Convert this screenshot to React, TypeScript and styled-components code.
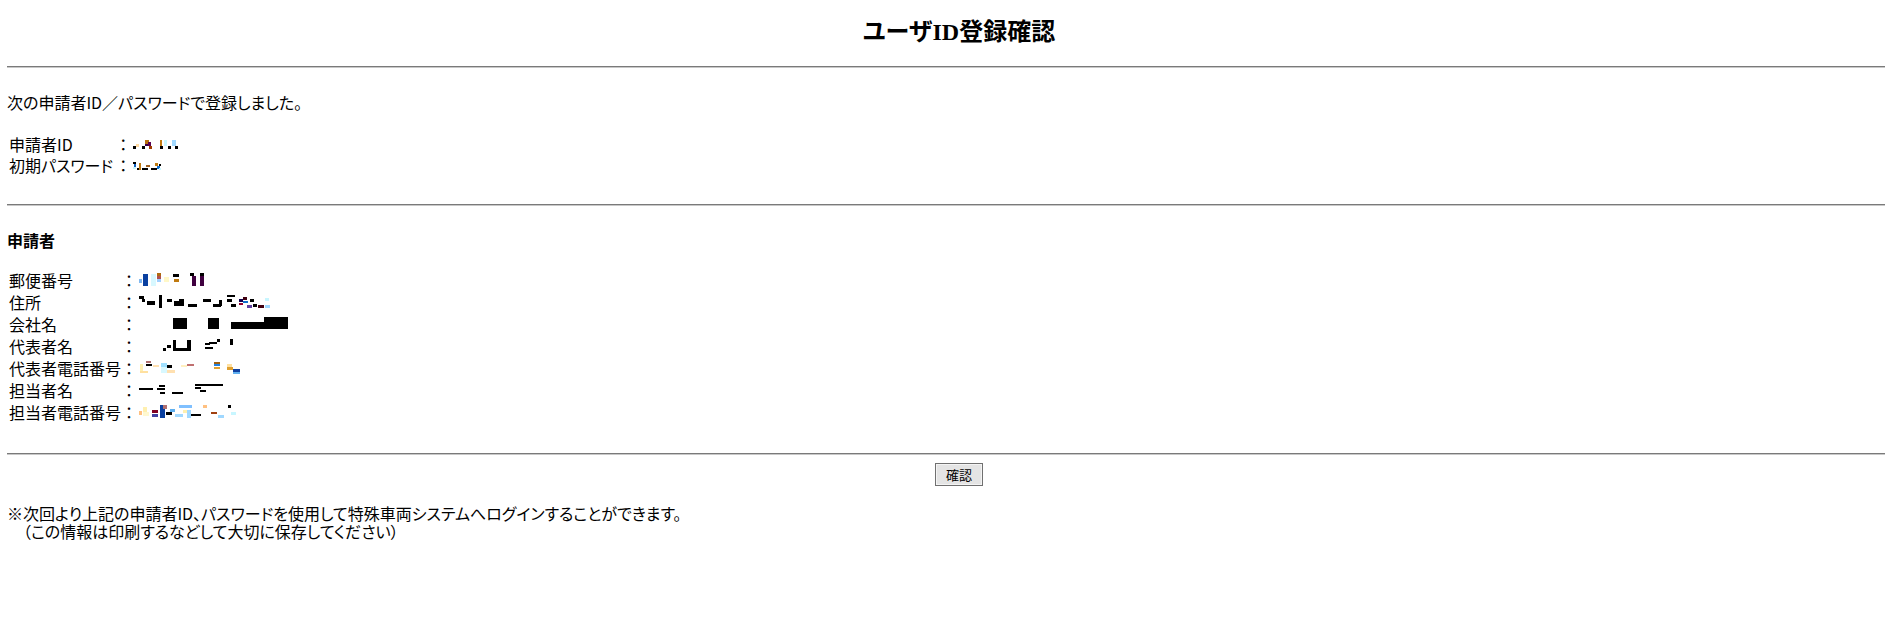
import React from 'react';
import styled, { createGlobalStyle } from 'styled-components';

type Block = [number, number, number, number, string];

const GlobalStyle = createGlobalStyle`
  html, body {
    margin: 0;
    padding: 0;
    background: #ffffff;
    overflow-x: hidden;
  }
  body {
    font-family: "Noto Sans CJK JP", "Liberation Sans", sans-serif;
    font-size: 16px;
    color: #000;
  }
`;

const Page = styled.div`
  width: 1904px;
  margin-left: 7px;
  font-feature-settings: "palt";
`;

const Title = styled.h2`
  margin: 17px 0 19px 0;
  font-family: "Liberation Serif", "Noto Sans CJK JP", serif;
  font-size: 24px;
  line-height: 30px;
  font-weight: bold;
  text-align: center;
`;

const Rule = styled.hr<{ $after: number }>`
  margin: 0 0 ${p => p.$after}px 0;
  height: 0;
  border: none;
  border-top: 1px solid #7a7a7a;
  border-bottom: 1px solid #c8c8c8;
`;

const Message = styled.p<{ $after: number }>`
  margin: 0 0 ${p => p.$after}px 0;
  line-height: 20px;
`;

const SectionTitle = styled.h4`
  margin: 0 0 19px 0;
  font-size: 16px;
  line-height: 20px;
  font-weight: bold;
`;

const InfoTable = styled.div<{ $row: number; $after: number }>`
  display: grid;
  grid-template-columns: max-content 16px 1fr;
  grid-auto-rows: ${p => p.$row}px;
  align-items: center;
  line-height: 18px;
  margin-bottom: ${p => p.$after}px;
`;

const Label = styled.div<{ $gap: number }>`
  padding-left: 2px;
  padding-right: ${p => p.$gap}px;
  white-space: nowrap;
`;

const Colon = styled.div`
  font-feature-settings: normal;
  text-align: center;
`;

const Value = styled.div`
  display: flex;
  align-items: center;
  padding-left: 2px;
`;

const ButtonRow = styled.div`
  display: flex;
  justify-content: center;
  margin: 8px 0 18px 0;
`;

const ConfirmButton = styled.button`
  width: 48px;
  height: 23px;
  padding: 0;
  font-family: "Noto Sans CJK JP", sans-serif;
  font-size: 13px;
  line-height: 18px;
  color: #000;
  background: #e4e4e4;
  border: 1px solid #707070;
  box-shadow: inset 0 0 0 1px #f4f4f4;
  cursor: pointer;
`;

const Note = styled.div`
  line-height: 18px;
`;

const Mosaic: React.FC<{ blocks: Block[]; width: number }> = ({ blocks, width }) => (
  <svg width={width} height={14} viewBox={`0 0 ${width} 14`} shapeRendering="crispEdges">
    {blocks.map(([x, y, w, h, c], i) => (
      <rect key={i} x={x} y={y} width={w} height={h} fill={c} />
    ))}
  </svg>
);

const idBlocks: Block[] = [
  [0, 9, 3, 3, '#000'], [3, 7, 3, 3, '#ffd9a0'], [9, 9, 3, 3, '#000'],
  [12, 3, 4, 4, '#b8700f'], [12, 7, 4, 2, '#3c0048'], [15, 5, 3, 4, '#5a0050'],
  [16, 9, 3, 3, '#a03c00'], [27, 3, 2, 6, '#c07a10'], [27, 9, 3, 3, '#000'],
  [31, 3, 3, 6, '#c8f6ff'], [35, 9, 3, 3, '#000'], [39, 3, 4, 6, '#a0d8ff'], [42, 9, 3, 3, '#000'],
];

const pwBlocks: Block[] = [
  [0, 4, 3, 2, '#000'], [1, 6, 2, 3, '#1060c0'], [0, 9, 3, 2, '#c8f6ff'], [4, 10, 4, 2, '#000'],
  [6, 5, 2, 7, '#c07a10'], [9, 10, 6, 2, '#000'], [13, 7, 4, 2, '#a06020'], [18, 10, 6, 2, '#000'],
  [22, 5, 3, 3, '#c07a10'], [24, 8, 3, 3, '#1070d0'], [26, 6, 2, 2, '#000'], [26, 10, 2, 2, '#c8f6ff'],
];

const postalBlocks: Block[] = [
  [0, 6, 3, 4, '#80b8f0'], [4, 1, 5, 12, '#0a40a0'], [12, 1, 5, 12, '#d8f8ff'],
  [18, 0, 4, 3, '#b06a10'], [18, 3, 4, 3, '#b05050'], [18, 6, 4, 3, '#a0d0ff'],
  [25, 4, 5, 5, '#fff8c8'], [34, 1, 6, 3, '#000'], [35, 6, 5, 3, '#c07a10'],
  [51, 0, 4, 3, '#000'], [53, 3, 4, 10, '#400040'], [61, 0, 4, 3, '#000'], [61, 3, 4, 10, '#400040'],
];

const addressBlocks: Block[] = [
  [0, 1, 5, 3, '#000'], [3, 4, 3, 3, '#000'], [8, 6, 8, 4, '#000'], [20, 0, 3, 13, '#000'],
  [28, 4, 5, 3, '#000'], [35, 6, 10, 5, '#000'], [40, 4, 5, 3, '#000'], [49, 9, 9, 3, '#000'],
  [64, 4, 8, 3, '#000'], [80, 5, 3, 6, '#000'], [74, 9, 8, 3, '#000'], [88, 0, 8, 2, '#000'],
  [88, 4, 5, 3, '#000'], [92, 9, 5, 3, '#000'], [100, 4, 4, 3, '#100050'], [104, 2, 4, 3, '#400010'],
  [100, 8, 4, 2, '#900030'], [104, 6, 5, 2, '#1070d0'], [108, 10, 5, 3, '#6040a0'],
  [111, 4, 4, 3, '#000'], [114, 9, 4, 3, '#000'], [119, 10, 6, 3, '#400010'], [126, 3, 4, 3, '#c8f6ff'],
  [126, 10, 5, 3, '#a0d8ff'],
];

const companyBlocks: Block[] = [
  [34, 1, 14, 11, '#000'], [69, 1, 11, 11, '#000'], [92, 5, 33, 7, '#000'], [125, 0, 24, 12, '#000'],
];

const repBlocks: Block[] = [
  [24, 9, 3, 3, '#000'], [28, 6, 4, 3, '#000'], [34, 1, 3, 11, '#000'], [34, 9, 18, 3, '#000'],
  [48, 1, 4, 11, '#000'], [66, 4, 5, 2, '#000'], [70, 3, 8, 2, '#000'], [66, 8, 8, 2, '#000'],
  [78, 0, 3, 3, '#000'], [91, 0, 3, 6, '#000'],
];

const repTelBlocks: Block[] = [
  [1, 3, 3, 8, '#fff0b0'], [1, 10, 8, 2, '#ffe0a0'], [7, 0, 5, 2, '#b07070'], [7, 3, 6, 2, '#000'],
  [14, 4, 6, 2, '#ffe0b0'], [22, 2, 6, 4, '#a0e0ff'], [22, 6, 6, 6, '#d8f8ff'], [28, 4, 5, 3, '#000'],
  [28, 9, 8, 3, '#ffe0b0'], [42, 4, 6, 2, '#fff0c0'], [48, 3, 7, 2, '#c07070'], [75, 1, 6, 2, '#a06010'],
  [75, 3, 6, 2, '#2080e0'], [75, 6, 6, 2, '#e0a030'], [88, 3, 5, 3, '#ffe0a0'], [88, 6, 6, 3, '#e0a030'],
  [94, 8, 7, 3, '#1040a0'], [94, 11, 7, 2, '#60b0f0'],
];

const staffBlocks: Block[] = [
  [0, 5, 14, 2, '#000'], [20, 2, 6, 2, '#000'], [18, 5, 8, 2, '#000'], [21, 9, 5, 2, '#000'],
  [33, 9, 11, 2, '#000'], [56, 1, 28, 2, '#000'], [56, 4, 6, 2, '#000'], [61, 7, 6, 2, '#000'],
];

const staffTelBlocks: Block[] = [
  [0, 6, 3, 4, '#ffc080'], [4, 2, 4, 5, '#fff0b0'], [4, 7, 6, 4, '#fff8d0'], [13, 5, 6, 3, '#800020'],
  [13, 9, 6, 3, '#4040a0'], [21, 0, 5, 13, '#0a40a0'], [24, 0, 4, 4, '#b07070'], [27, 7, 6, 3, '#000'],
  [31, 4, 5, 3, '#60b0f0'], [36, 9, 8, 3, '#a0d8ff'], [40, 0, 8, 3, '#80c0ff'], [44, 5, 6, 3, '#fff0b0'],
  [48, 0, 5, 3, '#80c0ff'], [48, 5, 4, 8, '#a0d8ff'], [52, 9, 10, 2, '#000'], [64, 0, 4, 3, '#ffc080'],
  [72, 7, 6, 2, '#a04010'], [79, 10, 6, 3, '#a0d8ff'], [89, 0, 3, 3, '#000'], [92, 7, 5, 3, '#c8f6ff'],
];

const loginRows: [string, Block[], number][] = [
  ['申請者ID', idBlocks, 48],
  ['初期パスワード', pwBlocks, 32],
];

const applicantRows: [string, Block[], number][] = [
  ['郵便番号', postalBlocks, 70],
  ['住所', addressBlocks, 134],
  ['会社名', companyBlocks, 152],
  ['代表者名', repBlocks, 96],
  ['代表者電話番号', repTelBlocks, 104],
  ['担当者名', staffBlocks, 88],
  ['担当者電話番号', staffTelBlocks, 100],
];

const App: React.FC = () => {
  return (
    <>
      <GlobalStyle />
      <Page>
        <Title>ユーザID登録確認</Title>
        <Rule $after={24} />
        <Message $after={21}>次の申請者ID／パスワードで登録しました。</Message>

        <InfoTable $row={21} $after={29}>
          {loginRows.map(([label, blocks, w]) => (
            <React.Fragment key={label}>
              <Label $gap={2}>{label}</Label>
              <Colon>：</Colon>
              <Value><Mosaic blocks={blocks} width={w} /></Value>
            </React.Fragment>
          ))}
        </InfoTable>

        <Rule $after={24} />
        <SectionTitle>申請者</SectionTitle>

        <InfoTable $row={22} $after={30}>
          {applicantRows.map(([label, blocks, w]) => (
            <React.Fragment key={label}>
              <Label $gap={0}>{label}</Label>
              <Colon>：</Colon>
              <Value><Mosaic blocks={blocks} width={w} /></Value>
            </React.Fragment>
          ))}
        </InfoTable>

        <Rule $after={0} />
        <ButtonRow>
          <ConfirmButton type="button">確認</ConfirmButton>
        </ButtonRow>

        <Note>
          <div>※次回より上記の申請者ID、パスワードを使用して特殊車両システムへログインすることができます。</div>
          <div>　（この情報は印刷するなどして大切に保存してください）</div>
        </Note>
      </Page>
    </>
  );
};

export default App;
